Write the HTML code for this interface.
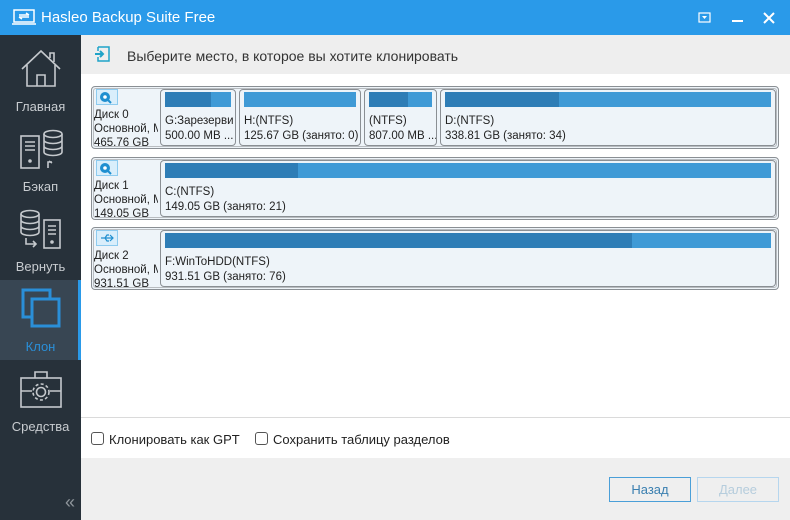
<!DOCTYPE html>
<html><head><meta charset="utf-8"><style>
*{margin:0;padding:0;box-sizing:border-box}
body{width:790px;height:520px;overflow:hidden;background:#1f2a33;font-family:"Liberation Sans","DejaVu Sans",sans-serif;position:relative}
.a{position:absolute}
.t{font-size:11.5px;color:#222;white-space:nowrap;line-height:14px}
.side{color:#c8ccd0;font-size:13px;text-align:center;width:81px}
.row{position:absolute;left:91px;width:688px;height:63px;border:1px solid #8a8f94;border-radius:4px;background:#eef4f9}
.row .in{position:absolute;inset:1px;border:1px solid #b8bcc0;border-radius:3px}
.part{position:absolute;top:2px;height:57px;border:1px solid #8a8f94;border-radius:4px;background:#eef4f9;overflow:hidden}
.bar{position:absolute;left:4px;right:4px;top:2px;height:15px;background:#3f9ad6}
.bar i{position:absolute;left:0;top:0;bottom:0;background:#2e7db6}
.part .l1{position:absolute;left:4px;top:24px}
.part .l2{position:absolute;left:4px;top:39px}
.lbl{position:absolute;left:2px;top:21px;font-size:11.5px;line-height:14px;color:#222;white-space:nowrap;width:64px;overflow:hidden}
.ico{position:absolute;left:4px;top:2px;width:22px;height:16px;border:1px solid #8ecbef;background:#d9eefb}
</style></head><body>
<div class="a" style="left:0;top:0;width:790px;height:35px;background:#2a9ae9"></div>
<svg class="a" style="left:12px;top:9px" width="24" height="16" viewBox="0 0 24 16"><rect x="2" y="1" width="20" height="12" fill="none" stroke="#fff" stroke-width="1.5"/><line x1="0" y1="15" x2="24" y2="15" stroke="#fff" stroke-width="1.5"/><path d="M7 6h10M14 4l3 2M17 8H7M10 10L7 8" stroke="#fff" stroke-width="1.4" fill="none"/></svg>
<div class="a" style="left:41px;top:9px;color:#fff;font-size:15px">Hasleo Backup Suite Free</div>
<svg class="a" style="left:698px;top:12px" width="14" height="12"><rect x="1" y="1" width="11" height="9" fill="none" stroke="#fff" stroke-width="1.2"/><path d="M4 4h5l-2.5 3z" fill="#fff"/></svg>
<div class="a" style="left:732px;top:20px;width:11px;height:2px;background:#fff"></div>
<svg class="a" style="left:763px;top:12px" width="12" height="12"><path d="M1 1L11 11M11 1L1 11" stroke="#fff" stroke-width="2"/></svg>
<div class="a" style="left:0;top:35px;width:81px;height:485px;background:#27313a"></div>
<div class="a" style="left:0;top:280px;width:78px;height:80px;background:#384653"></div>
<div class="a" style="left:78px;top:280px;width:3px;height:80px;background:#2a9ae9"></div>
<svg class="a" style="left:20px;top:48px" width="42" height="42" viewBox="0 0 42 42" fill="none" stroke="#c5c9cd" stroke-width="1.6"><path d="M2 21L21 3l19 18M7 17v21h28V17M17 38V27h8v11M30 10V5h4v9"/></svg>
<div class="a side" style="left:0;top:99px">Главная</div>
<svg class="a" style="left:18px;top:128px" width="46" height="44" viewBox="0 0 46 44" fill="none" stroke="#c5c9cd" stroke-width="1.6"><rect x="3" y="8" width="18" height="32"/><path d="M7 14h10M7 18h10M7 22h10"/><circle cx="12" cy="33" r="1" fill="#c5c9cd"/><ellipse cx="35" cy="6" rx="9" ry="3.5"/><path d="M26 6v18c0 2 4 3.5 9 3.5s9-1.5 9-3.5V6M26 12c0 2 4 3.5 9 3.5s9-1.5 9-3.5M26 18c0 2 4 3.5 9 3.5s9-1.5 9-3.5M30 40v-6h4M31 33l3 2"/></svg>
<div class="a side" style="left:0;top:179px">Бэкап</div>
<svg class="a" style="left:18px;top:208px" width="46" height="44" viewBox="0 0 46 44" fill="none" stroke="#c5c9cd" stroke-width="1.6"><ellipse cx="12" cy="6" rx="9" ry="3.5"/><path d="M3 6v18c0 2 4 3.5 9 3.5s9-1.5 9-3.5V6M3 12c0 2 4 3.5 9 3.5s9-1.5 9-3.5M3 18c0 2 4 3.5 9 3.5s9-1.5 9-3.5"/><rect x="26" y="12" width="16" height="28"/><path d="M30 18h8M30 22h8M30 26h8M8 30v6h10M15 33l3 3-3 3"/><circle cx="34" cy="34" r="1" fill="#c5c9cd"/></svg>
<div class="a side" style="left:0;top:259px">Вернуть</div>
<svg class="a" style="left:20px;top:287px" width="42" height="44" viewBox="0 0 42 44" fill="none" stroke="#2a8fd8" stroke-width="3"><path d="M12 30H3V3h27v9"/><rect x="12" y="12" width="27" height="27"/></svg>
<div class="a side" style="left:0;top:339px;color:#2a8fd8">Клон</div>
<svg class="a" style="left:19px;top:369px" width="44" height="40" viewBox="0 0 44 40" fill="none" stroke="#c5c9cd" stroke-width="1.6"><rect x="2" y="9" width="40" height="29"/><path d="M16 9V3h12v6M2 22h11M31 22h11"/><circle cx="22" cy="23" r="4.5"/><circle cx="22" cy="23" r="8" stroke-dasharray="3 2.3"/></svg>
<div class="a side" style="left:0;top:419px">Средства</div>
<div class="a" style="left:65px;top:492px;color:#8e959b;font-size:18px">«</div>
<div class="a" style="left:81px;top:35px;width:709px;height:485px;background:#fff"></div>
<div class="a" style="left:81px;top:35px;width:709px;height:39px;background:#eeeeee"></div>
<svg class="a" style="left:94px;top:46px" width="16" height="16" viewBox="0 0 16 16"><path d="M4 1h11v14H4V11M4 5V1" stroke="#1fa3c8" stroke-width="1.5" fill="none"/><path d="M1 8h8M6 5l3 3-3 3" stroke="#1fa3c8" stroke-width="2" fill="none"/></svg>
<div class="a" style="left:127px;top:48px;font-size:14px;color:#333">Выберите место, в которое вы хотите клонировать</div>

<div class="row" style="top:86px"><div class="in"></div>
 <div class="ico"><svg width="20" height="14"><circle cx="8" cy="7" r="5" fill="#1f8fd0"/><circle cx="8" cy="7" r="1.8" fill="#fff"/><path d="M10 9l4 4" stroke="#1f8fd0" stroke-width="2"/></svg></div>
 <div class="lbl">Диск 0<br>Основной, MBR<br>465.76 GB</div>
 <div class="part" style="left:68px;width:76px"><div class="bar"><i style="width:70%"></i></div><div class="t l1">G:Зарезерви</div><div class="t l2">500.00 MB ...</div></div>
 <div class="part" style="left:147px;width:122px"><div class="bar"></div><div class="t l1">H:(NTFS)</div><div class="t l2">125.67 GB (занято: 0)</div></div>
 <div class="part" style="left:272px;width:73px"><div class="bar"><i style="width:62%"></i></div><div class="t l1">(NTFS)</div><div class="t l2">807.00 MB ...</div></div>
 <div class="part" style="left:348px;width:336px"><div class="bar"><i style="width:35%"></i></div><div class="t l1">D:(NTFS)</div><div class="t l2">338.81 GB (занято: 34)</div></div>
</div>
<div class="row" style="top:157px"><div class="in"></div>
 <div class="ico"><svg width="20" height="14"><circle cx="8" cy="7" r="5" fill="#1f8fd0"/><circle cx="8" cy="7" r="1.8" fill="#fff"/><path d="M10 9l4 4" stroke="#1f8fd0" stroke-width="2"/></svg></div>
 <div class="lbl">Диск 1<br>Основной, MBR<br>149.05 GB</div>
 <div class="part" style="left:68px;width:616px"><div class="bar"><i style="width:22%"></i></div><div class="t l1">C:(NTFS)</div><div class="t l2">149.05 GB (занято: 21)</div></div>
</div>
<div class="row" style="top:227px"><div class="in"></div>
 <div class="ico"><svg width="20" height="14"><path d="M4 7h12M13 4l3 3-3 3M8 7l2-3h2M8 7l2 3h2" stroke="#1f8fd0" stroke-width="1.2" fill="none"/></svg></div>
 <div class="lbl">Диск 2<br>Основной, MBR<br>931.51 GB</div>
 <div class="part" style="left:68px;width:616px"><div class="bar"><i style="width:77%"></i></div><div class="t l1">F:WinToHDD(NTFS)</div><div class="t l2">931.51 GB (занято: 76)</div></div>
</div>

<div class="a" style="left:81px;top:417px;width:709px;height:1px;background:#dadada"></div>
<div class="a" style="left:91px;top:432px;width:13px;height:13px;border:1px solid #555;border-radius:3px;background:#fff"></div>
<div class="a" style="left:109px;top:432px;font-size:13px;color:#222">Клонировать как GPT</div>
<div class="a" style="left:255px;top:432px;width:13px;height:13px;border:1px solid #555;border-radius:3px;background:#fff"></div>
<div class="a" style="left:273px;top:432px;font-size:13px;color:#222">Сохранить таблицу разделов</div>

<div class="a" style="left:81px;top:458px;width:709px;height:62px;background:#efefef"></div>
<div class="a" style="left:609px;top:477px;width:82px;height:25px;border:1px solid #4a9fd8;color:#3a7fb0;font-size:13px;text-align:center;line-height:23px">Назад</div>
<div class="a" style="left:697px;top:477px;width:82px;height:25px;border:1px solid #b6d6ee;color:#b6cddd;font-size:13px;text-align:center;line-height:23px">Далее</div>
</body></html>
